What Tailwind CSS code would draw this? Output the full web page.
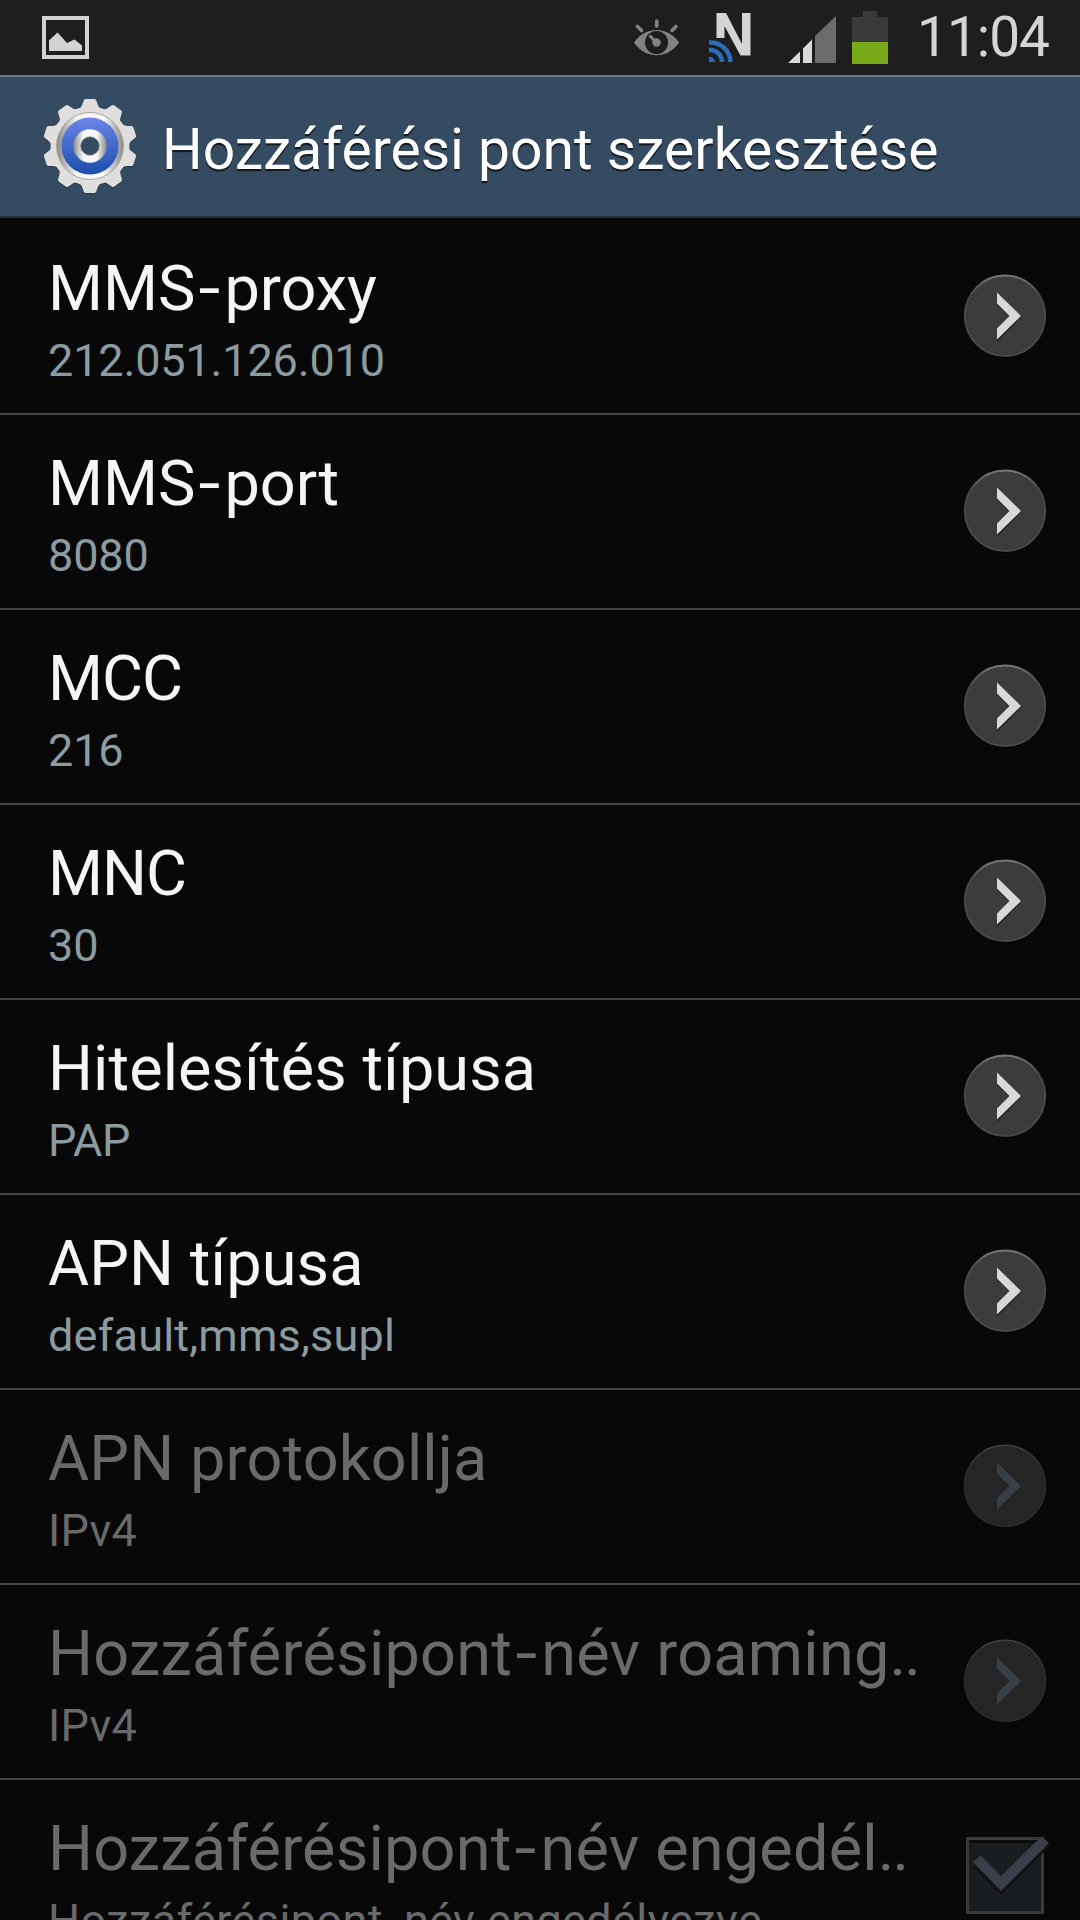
<!DOCTYPE html>
<html lang="hu">
<head>
    <meta charset="UTF-8">
    <meta name="viewport" content="width=device-width, initial-scale=1.0">
    <title>Hozzáférési pont szerkesztése</title>
    <script src="https://cdn.jsdelivr.net/npm/@tailwindcss/browser@4"></script>
</head>
<body class="bg-[#080808] font-['Roboto',sans-serif]">
    <!-- Shared icons (zero size, display:none would drop the gradients) -->
    <svg class="block size-0">
        <defs>
            <linearGradient id="rim" x1="0" y1="0" x2="0" y2="1">
                <stop offset="0" stop-color="#777"/>
                <stop offset=".25" stop-color="#484848"/>
                <stop offset="1" stop-color="#484848"/>
            </linearGradient>
            <linearGradient id="rimOff" x1="0" y1="0" x2="0" y2="1">
                <stop offset="0" stop-color="#444"/>
                <stop offset=".3" stop-color="#2e2e2e"/>
                <stop offset="1" stop-color="#2c2c2c"/>
            </linearGradient>
        </defs>
        <symbol id="arrow" viewBox="0 0 84 84">
            <circle cx="42" cy="42.5" r="41.5" fill="#000"/>
            <circle cx="42" cy="41.8" r="40.2" fill="#3c3c3c" stroke="url(#rim)" stroke-width="2"/>
            <path d="M34 20v11l12.5 12L34 55.500v12.500L58.500 43z" fill="#222"/>
            <path d="M34 18.500v11L46.500 42 34 54.500v11L58 42z" fill="#d8d8d8"/>
        </symbol>
        <symbol id="arrow-off" viewBox="0 0 84 84">
            <circle cx="42" cy="41.8" r="40.6" fill="#252525" stroke="url(#rimOff)" stroke-width="1.400"/>
            <path d="M34 18.500v11L46.500 42 34 54.500v11L58 42z" fill="#393f46"/>
        </symbol>
    </svg>

    <div class="w-[1080px] h-[1920px] overflow-hidden flex flex-col">
        <!-- Status bar -->
        <div class="h-[75px] shrink-0 bg-[#1e1e1e] flex items-start">
            <svg class="ml-[42px] mt-4 w-12 h-[43px]" viewBox="0 0 48 43">
                <path d="M2 2h43v39H2z" fill="none" stroke="#d2d2d2" stroke-width="4"/>
                <path d="M7 35V24.500l8.500-8 9.500 10.500 7.500-3.500 7.500 6V35z" fill="#d2d2d2"/>
            </svg>
            <svg class="ml-[543px] mt-[18px] w-12 h-[39px]" viewBox="0 0 48 39">
                <g stroke="#828282" stroke-width="3.600" stroke-linecap="round">
                    <path d="M23.700 3v5M4.500 8.500l4 4M43 8.500l-4 4"/>
                </g>
                <path d="M1 24.500C6 17 14 12 23.500 12S41 17 46 24.500C41 32 33 37.200 23.500 37.200S6 32 1 24.500z" fill="#828282"/>
                <circle cx="23.500" cy="24.500" r="11.500" fill="#1e1e1e"/>
                <circle cx="23.500" cy="24.500" r="4.200" fill="#828282"/>
                <path d="M16.500 17.500l6 6" stroke="#828282" stroke-width="3"/>
            </svg>
            <svg class="ml-6 mt-3 w-12 h-[51px]" viewBox="0 0 48 51">
                <path d="M11.500 26V1h9.500L37 32V1H45.500v42.500H35.500L19.500 14V26z" fill="#d4d4d4"/>
                <g fill="none" stroke="#2a6ebb" stroke-width="4.600">
                    <path d="M4 30.500A20 20 0 0 1 25.500 50"/>
                    <path d="M4 38a12 12 0 0 1 13 12"/>
                </g>
                <path d="M4 44.500a6 6 0 0 1 6 5.500H4z" fill="#2a6ebb"/>
            </svg>
            <svg class="ml-[35px] mt-[15px] w-12 h-12" viewBox="0 0 48 48">
                <path d="M0 48l12-11.500V48zM15 48V33.500l9-9V48z" fill="#d8d8d8"/>
                <path d="M27 48V21L48 1v47z" fill="#6c6c6c"/>
            </svg>
            <svg class="ml-4 mt-[11px] w-9 h-[53px]" viewBox="0 0 36 53">
                <path d="M11 0h14.500v6H36v25H0V6h11z" fill="#3a3a3a"/>
                <path d="M0 31h36v22H0z" fill="#78aa19"/>
            </svg>
            <span class="ml-[29px] mt-1 text-[55px] leading-[66px] tracking-[-1px] text-[#d4d4d4] whitespace-nowrap">11:04</span>
        </div>

        <!-- Title bar -->
        <div class="h-[143px] shrink-0 bg-[#344b62] border-t-2 border-t-[#69778a] border-b-2 border-b-[#22303e] flex items-start">
            <svg class="ml-[41px] mt-5 w-[98px] h-[98px]" viewBox="-49 -49 98 98">
                <defs>
                    <linearGradient id="ring" x1="0" y1="0" x2="1" y2="0">
                        <stop offset="0" stop-color="#8b8987"/>
                        <stop offset=".3" stop-color="#f5f5f5"/>
                        <stop offset=".7" stop-color="#fafafa"/>
                        <stop offset="1" stop-color="#8b8987"/>
                    </linearGradient>
                    <linearGradient id="blue" x1="0" y1="0" x2="0" y2="1">
                        <stop offset="0" stop-color="#6b86e6"/>
                        <stop offset=".5" stop-color="#4468cc"/>
                        <stop offset="1" stop-color="#1b4fae"/>
                    </linearGradient>
                    <path id="tooth" d="M-11-37Q-8.500-38.500-7.500-42L-6.500-45Q-6-47-4.500-47H4.500Q6-47 6.500-45L7.500-42Q8.500-38.500 11-37V-28H-11z"/>
                    <g id="gear">
                        <circle r="39.500"/>
                        <use href="#tooth"/>
                        <use href="#tooth" transform="rotate(36)"/>
                        <use href="#tooth" transform="rotate(72)"/>
                        <use href="#tooth" transform="rotate(108)"/>
                        <use href="#tooth" transform="rotate(144)"/>
                        <use href="#tooth" transform="rotate(180)"/>
                        <use href="#tooth" transform="rotate(216)"/>
                        <use href="#tooth" transform="rotate(252)"/>
                        <use href="#tooth" transform="rotate(288)"/>
                        <use href="#tooth" transform="rotate(324)"/>
                    </g>
                </defs>
                <use href="#gear" y="1" fill="#27384a"/>
                <use href="#gear" fill="#e0dfdd"/>
                <circle r="33.500" fill="url(#ring)" stroke="#aaa7a3" stroke-width="1"/>
                <circle r="28.500" fill="url(#blue)"/>
                <circle r="16.700" fill="url(#ring)"/>
                <circle r="9.300" fill="#344b62" stroke="#8d8d8d" stroke-width=".7"/>
            </svg>
            <h1 class="ml-[23px] mt-[39px] text-[57px] leading-[68px] text-white whitespace-nowrap text-shadow-[0_2px_1px_rgb(0_0_0/0.7)]">Hozzáférési pont szerkesztése</h1>
        </div>

        <!-- Settings list -->
        <ul class="pt-0.5 text-[#f5f5f5]">
            <li class="h-[195px] border-b-2 border-[#444] flex">
                <div class="ml-12 mt-8 w-[915px] whitespace-nowrap">
                    <div class="text-[63px] leading-[74px]">MMS<span class="inline-block w-[29px] text-center scale-x-125">-</span>proxy</div>
                    <div class="mt-2 text-[45px] leading-[53px] tracking-[-0.15px] text-[#8c9ba0]">212.051.126.010</div>
                </div>
                <svg class="mt-[54px] w-[84px] h-[84px]"><use href="#arrow"/></svg>
            </li>
            <li class="h-[195px] border-b-2 border-[#444] flex">
                <div class="ml-12 mt-8 w-[915px] whitespace-nowrap">
                    <div class="text-[63px] leading-[74px]">MMS<span class="inline-block w-[29px] text-center scale-x-125">-</span>port</div>
                    <div class="mt-2 text-[45px] leading-[53px] tracking-[-0.15px] text-[#8c9ba0]">8080</div>
                </div>
                <svg class="mt-[54px] w-[84px] h-[84px]"><use href="#arrow"/></svg>
            </li>
            <li class="h-[195px] border-b-2 border-[#444] flex">
                <div class="ml-12 mt-8 w-[915px] whitespace-nowrap">
                    <div class="text-[63px] leading-[74px] tracking-[-1px]">MCC</div>
                    <div class="mt-2 text-[45px] leading-[53px] tracking-[-0.15px] text-[#8c9ba0]">216</div>
                </div>
                <svg class="mt-[54px] w-[84px] h-[84px]"><use href="#arrow"/></svg>
            </li>
            <li class="h-[195px] border-b-2 border-[#444] flex">
                <div class="ml-12 mt-8 w-[915px] whitespace-nowrap">
                    <div class="text-[63px] leading-[74px] tracking-[-1px]">MNC</div>
                    <div class="mt-2 text-[45px] leading-[53px] tracking-[-0.15px] text-[#8c9ba0]">30</div>
                </div>
                <svg class="mt-[54px] w-[84px] h-[84px]"><use href="#arrow"/></svg>
            </li>
            <li class="h-[195px] border-b-2 border-[#444] flex">
                <div class="ml-12 mt-8 w-[915px] whitespace-nowrap">
                    <div class="text-[63px] leading-[74px] tracking-[0.1px]">Hitelesítés típusa</div>
                    <div class="mt-2 text-[45px] leading-[53px] tracking-[-0.3px] text-[#8c9ba0]">PAP</div>
                </div>
                <svg class="mt-[54px] w-[84px] h-[84px]"><use href="#arrow"/></svg>
            </li>
            <li class="h-[195px] border-b-2 border-[#444] flex">
                <div class="ml-12 mt-8 w-[915px] whitespace-nowrap">
                    <div class="text-[63px] leading-[74px] tracking-[0.1px]">APN típusa</div>
                    <div class="mt-2 text-[45px] leading-[53px] tracking-[0.2px] text-[#8c9ba0]">default,mms,supl</div>
                </div>
                <svg class="mt-[54px] w-[84px] h-[84px]"><use href="#arrow"/></svg>
            </li>
            <!-- Disabled entries -->
            <li class="h-[195px] border-b-2 border-[#444] flex text-[#6a6a6a]">
                <div class="ml-12 mt-8 w-[915px] whitespace-nowrap">
                    <div class="text-[63px] leading-[74px] tracking-[0.15px]">APN protokollja</div>
                    <div class="mt-2 text-[45px] leading-[53px] tracking-[0.25px]">IPv4</div>
                </div>
                <svg class="mt-[54px] w-[84px] h-[84px]"><use href="#arrow-off"/></svg>
            </li>
            <li class="h-[195px] border-b-2 border-[#444] flex text-[#6a6a6a]">
                <div class="ml-12 mt-8 w-[915px] whitespace-nowrap">
                    <div class="text-[63px] leading-[74px] tracking-[0.25px]">Hozzáférésipont<span class="inline-block w-[29px] text-center scale-x-125">-</span>név roaming<span class="tracking-[-2px]">..</span></div>
                    <div class="mt-2 text-[45px] leading-[53px] tracking-[0.25px]">IPv4</div>
                </div>
                <svg class="mt-[54px] w-[84px] h-[84px]"><use href="#arrow-off"/></svg>
            </li>
            <li class="h-[195px] flex text-[#6a6a6a]">
                <div class="ml-12 mt-8 w-[915px] whitespace-nowrap">
                    <div class="text-[63px] leading-[74px] tracking-[0.2px]">Hozzáférésipont<span class="inline-block w-[29px] text-center scale-x-125">-</span>név engedél<span class="tracking-[-2px]">..</span></div>
                    <div class="mt-2 text-[45px] leading-[53px] tracking-[0.4px]">Hozzáférésipont<span class="inline-block w-[21px] text-center scale-x-125">-</span>név engedélyezve</div>
                </div>
                <svg class="ml-px mt-[54px] w-[88px] h-[84px]" viewBox="0 0 88 84">
                    <path d="M3.500 4.500h75v74h-75z" fill="#1a1d20" stroke="#3a3a3a" stroke-width="3"/>
                    <path d="M5 6h72v3H5z" fill="#0c0d0e"/>
                    <path d="M9.500 31.500L37 59 84 12" fill="none" stroke="#111" stroke-width="3"/>
                    <path d="M9 28l7.500-6.500L37 42 77.500 2.500 85 9 37 57z" fill="#3b3f4a"/>
                </svg>
            </li>
        </ul>
    </div>
</body>
</html>
